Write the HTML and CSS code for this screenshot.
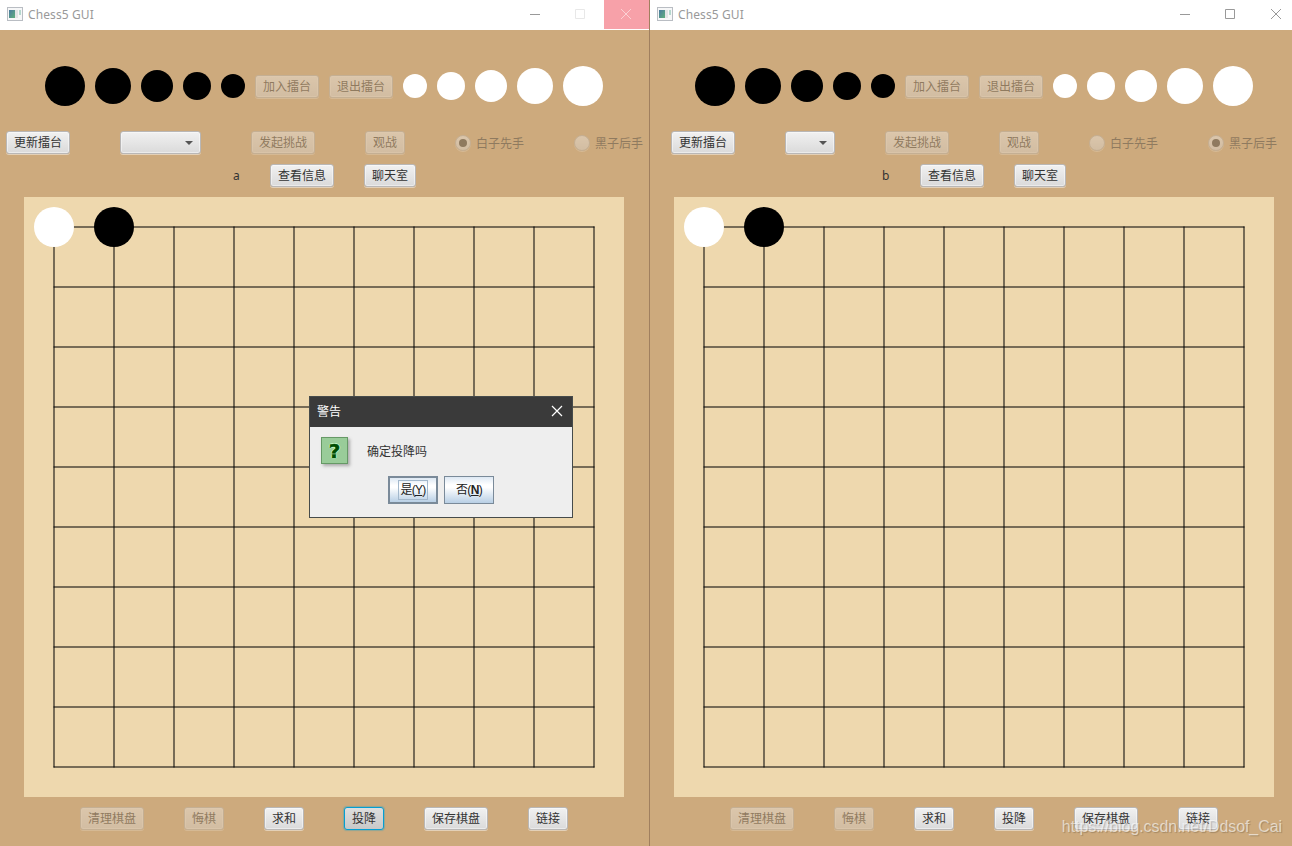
FILE: index.html
```
<!DOCTYPE html>
<html lang="zh-CN">

<head>
   <meta charset="utf-8" />
   <title>Chess5 GUI</title>
   <link rel="stylesheet" href="styles.css">
</head>

<body>
   <!-- shared shapes -->
   <svg class="defs" width="0" height="0">
      <defs>
         <linearGradient id="screen" x1="0" y1="0" x2="1" y2="1">
            <stop offset="0" stop-color="#4a7aa0" />
            <stop offset="1" stop-color="#5fb07c" />
         </linearGradient>
         <symbol id="app-icon" viewBox="0 0 16 14">
            <rect x="0.5" y="0.5" width="15" height="13" fill="#f6f7f8" stroke="#b9bdc3" />
            <rect x="2" y="3" width="6" height="8" fill="url(#screen)" />
            <rect x="8" y="3" width="3" height="8" fill="#e2e4e5" />
            <rect x="12" y="3" width="2" height="5" fill="#b5d8ce" />
         </symbol>
         <symbol id="grid" viewBox="0 0 600 600">
            <g stroke="#000" stroke-width="1" stroke-linecap="square">
               <path d="M30 30H570" /><path d="M30 90H570" /><path d="M30 150H570" /><path d="M30 210H570" /><path d="M30 270H570" />
               <path d="M30 330H570" /><path d="M30 390H570" /><path d="M30 450H570" /><path d="M30 510H570" /><path d="M30 570H570" />
               <path d="M30 30V570" /><path d="M90 30V570" /><path d="M150 30V570" /><path d="M210 30V570" /><path d="M270 30V570" />
               <path d="M330 30V570" /><path d="M390 30V570" /><path d="M450 30V570" /><path d="M510 30V570" /><path d="M570 30V570" />
            </g>
            <circle cx="30" cy="30" r="20" fill="#fff" />
            <circle cx="90" cy="30" r="20" fill="#000" />
         </symbol>
      </defs>
   </svg>

   <div class="desktop">
      <section class="window window-a">
         <header class="titlebar">
            <svg class="app-icon"><use href="#app-icon" /></svg>
            <span class="title">Chess5 GUI</span>
            <div class="controls">
               <svg class="ctl" viewBox="0 0 45 29"><path d="M16 14.5h10" /></svg>
               <svg class="ctl faded" viewBox="0 0 45 29"><path d="M16.5 9.5h9v9h-9z" /></svg>
               <svg class="ctl close hot" viewBox="0 0 45 29"><path d="M17 9l10 10M27 9l-10 10" /></svg>
            </div>
         </header>
         <div class="stones">
            <i class="stone black s40"></i><i class="stone black s36"></i><i class="stone black s32"></i><i class="stone black s28"></i><i class="stone black s24"></i>
            <button class="btn w64" disabled>加入擂台</button>
            <button class="btn w64" disabled>退出擂台</button>
            <i class="stone white s24"></i><i class="stone white s28"></i><i class="stone white s32"></i><i class="stone white s36"></i><i class="stone white s40"></i>
         </div>
         <div class="arena">
            <button class="btn w64">更新擂台</button>
            <div class="combo"></div>
            <button class="btn w64" disabled>发起挑战</button>
            <button class="btn w40" disabled>观战</button>
            <span class="radio"><i class="dot on"></i>白子先手</span>
            <span class="radio"><i class="dot"></i>黑子后手</span>
         </div>
         <div class="user">
            <span class="name">a</span>
            <button class="btn w64">查看信息</button>
            <button class="btn w52">聊天室</button>
         </div>
         <svg class="board"><use href="#grid" /></svg>
         <footer class="actions">
            <button class="btn w64" disabled>清理棋盘</button>
            <button class="btn w40" disabled>悔棋</button>
            <button class="btn w40">求和</button>
            <button class="btn w40 focused">投降</button>
            <button class="btn w64">保存棋盘</button>
            <button class="btn w40">链接</button>
         </footer>
      </section>

      <section class="window window-b">
         <header class="titlebar">
            <svg class="app-icon"><use href="#app-icon" /></svg>
            <span class="title">Chess5 GUI</span>
            <div class="controls">
               <svg class="ctl" viewBox="0 0 45 29"><path d="M16 14.5h10" /></svg>
               <svg class="ctl" viewBox="0 0 45 29"><path d="M16.5 9.5h9v9h-9z" /></svg>
               <svg class="ctl close" viewBox="0 0 45 29"><path d="M17 9l10 10M27 9l-10 10" /></svg>
            </div>
         </header>
         <div class="stones">
            <i class="stone black s40"></i><i class="stone black s36"></i><i class="stone black s32"></i><i class="stone black s28"></i><i class="stone black s24"></i>
            <button class="btn w64" disabled>加入擂台</button>
            <button class="btn w64" disabled>退出擂台</button>
            <i class="stone white s24"></i><i class="stone white s28"></i><i class="stone white s32"></i><i class="stone white s36"></i><i class="stone white s40"></i>
         </div>
         <div class="arena">
            <button class="btn w64">更新擂台</button>
            <div class="combo"></div>
            <button class="btn w64" disabled>发起挑战</button>
            <button class="btn w40" disabled>观战</button>
            <span class="radio"><i class="dot"></i>白子先手</span>
            <span class="radio"><i class="dot on"></i>黑子后手</span>
         </div>
         <div class="user">
            <span class="name">b</span>
            <button class="btn w64">查看信息</button>
            <button class="btn w52">聊天室</button>
         </div>
         <svg class="board"><use href="#grid" /></svg>
         <footer class="actions">
            <button class="btn w64" disabled>清理棋盘</button>
            <button class="btn w40" disabled>悔棋</button>
            <button class="btn w40">求和</button>
            <button class="btn w40">投降</button>
            <button class="btn w64">保存棋盘</button>
            <button class="btn w40">链接</button>
         </footer>
      </section>

      <div class="dialog">
         <div class="dialog-title">
            <span>警告</span>
            <svg class="dialog-close" viewBox="0 0 10 10"><path d="M0 0l10 10M10 0L0 10" /></svg>
         </div>
         <div class="dialog-body">
            <span class="question">?</span>
            <span>确定投降吗</span>
         </div>
         <div class="dialog-buttons">
            <button class="swing default"><span>是(<u>Y</u>)</span></button>
            <button class="swing"><span>否(<u>N</u>)</span></button>
         </div>
      </div>
      <div class="watermark">https://blog.csdn.net/Ddsof_Cai</div>
   </div>
</body>

</html>
```
FILE: styles.css
```
* {
   box-sizing: border-box
}

body {
   margin: 0;
   font: 12px/16px "Noto Sans", "Noto Sans CJK SC", sans-serif;
   color: #333;
}

.defs {
   position: absolute;
}

.desktop {
   position: relative;
   display: flex;
   width: 1292px;
   height: 846px;
   overflow: hidden;
   background: #cdaa7d;
}

.window {
   display: flex;
   flex-direction: column;
   height: 846px;
}

.window-a {
   width: 650px;
   border-right: 1px solid #a07f5f;
}

.window-b {
   width: 642px;
}

/* title bar */
.titlebar {
   display: flex;
   height: 30px;
   padding-left: 7px;
   background: #fff;
}

.app-icon {
   width: 16px;
   height: 14px;
   margin: 7px 5px 0 0;
}

.title {
   color: #999;
   line-height: 29px;
   letter-spacing: 0.1px;
}

.controls {
   display: flex;
   margin-left: auto;
}

.window-b .controls {
   margin-right: -7px;
}

.ctl {
   width: 45px;
   height: 29px;
   fill: none;
   stroke: #999;
}

.faded {
   stroke: #e8e8e8;
}

.hot {
   background: #f7a1a9;
   stroke: #fbd0d4;
}

/* toolbar rows */
.stones {
   display: flex;
   align-items: center;
   gap: 10px;
   height: 112px;
   padding-left: 45px;
}

.stone {
   border-radius: 50%;
}

.black {
   background: #000;
}

.white {
   background: #fff;
}

.s40 { width: 40px; height: 40px; }
.s36 { width: 36px; height: 36px; }
.s32 { width: 32px; height: 32px; }
.s28 { width: 28px; height: 28px; }
.s24 { width: 24px; height: 24px; }

.stones .btn {
   margin-top: 1px;
}

.btn {
   flex: none;
   height: 23px;
   padding: 1px 0 0;
   border: 1px solid #b9b7b6;
   border-radius: 3px;
   background: linear-gradient(#f1f1f1, #dadada);
   box-shadow: inset 0 0 0 1px rgba(255, 255, 255, 0.45), 0 1px 0 rgba(255, 255, 255, 0.45);
   font: inherit;
   color: #333;
   white-space: nowrap;
}

.btn:disabled {
   opacity: 0.4;
}

.focused {
   border-color: #039ed3;
   background: linear-gradient(#dedede, #c8c8c8);
   box-shadow: 0 0 1px 1px rgba(3, 158, 211, 0.3);
}

.w64 { width: 64px; }
.w52 { width: 52px; }
.w40 { width: 40px; }

.arena {
   display: flex;
   align-items: flex-start;
   gap: 50px;
   height: 33px;
   margin-top: -11px;
   padding-left: 6px;
}

.window-b .arena {
   padding-left: 21px;
}

.combo {
   display: flex;
   flex: none;
   align-items: center;
   justify-content: flex-end;
   width: 81px;
   height: 23px;
   padding-right: 7px;
   border: 1px solid #b9b7b6;
   border-radius: 3px;
   background: linear-gradient(#f1f1f1, #dadada);
   box-shadow: inset 0 0 0 1px rgba(255, 255, 255, 0.45), 0 1px 0 rgba(255, 255, 255, 0.45);
}

.window-b .combo {
   width: 50px;
}

.combo::after {
   content: "";
   border: 4px solid transparent;
   border-top-color: #555;
   border-bottom: 0;
}

.radio {
   display: flex;
   flex: none;
   align-items: center;
   gap: 5px;
   width: 69px;
   height: 26px;
   opacity: 0.4;
   white-space: nowrap;
}

.dot {
   display: flex;
   flex: none;
   align-items: center;
   justify-content: center;
   width: 16px;
   height: 16px;
   margin-top: -2px;
   border: 1px solid #b9b7b6;
   border-radius: 50%;
   background: linear-gradient(#f1f1f1, #dadada);
   box-shadow: 0 1px 0 rgba(255, 255, 255, 0.45);
}

.on::after {
   content: "";
   width: 8px;
   height: 8px;
   border-radius: 50%;
   background: #333;
}

.user {
   display: flex;
   gap: 30px;
   height: 33px;
   padding-left: 233px;
}

.window-b .user {
   padding-left: 232px;
}

.name {
   width: 7px;
   line-height: 23px;
}

.window-b .name {
   width: 8px;
}

.board {
   flex: none;
   width: 600px;
   height: 600px;
   margin-left: 24px;
   background: #eed8ae;
}

.actions {
   display: flex;
   gap: 40px;
   padding: 10px 0 0 80px;
}

/* confirm dialog */
.dialog {
   position: absolute;
   left: 309px;
   top: 396px;
   width: 264px;
   height: 122px;
   border: 1px solid #464b4b;
   background: #eee;
}

.dialog-title {
   display: flex;
   align-items: center;
   justify-content: space-between;
   height: 30px;
   padding: 0 10px 0 7px;
   background: #3a3a3a;
   color: #fff;
}

.dialog-close {
   width: 10px;
   height: 10px;
   margin-top: -2px;
   overflow: visible;
   stroke: #fff;
   stroke-width: 1.2;
}

.dialog-body {
   display: flex;
   align-items: center;
   gap: 19px;
   height: 49px;
   padding-left: 11px;
}

.question {
   width: 27px;
   height: 27px;
   margin-top: -2px;
   border: 1px solid #669966;
   background: #99cc99;
   box-shadow: 2px 2px 3px #aaa;
   color: #004d00;
   font: bold 20px/26px "DejaVu Sans", sans-serif;
   text-align: center;
   text-shadow: 1px 0 #ccffcc, -1px 0 #ccffcc, 0 1px #ccffcc, 0 -1px #ccffcc;
   -webkit-text-stroke: 0.5px #004d00;
}

.dialog-buttons {
   display: flex;
   justify-content: center;
   gap: 6px;
}

.swing {
   width: 50px;
   height: 28px;
   padding: 0;
   border: 1px solid #7a8a99;
   background: linear-gradient(#dde8f3, #fff 30%, #fff 40%, #b8cfe5);
   font: 12px/18px "Liberation Sans", "Noto Sans CJK SC", sans-serif;
   letter-spacing: -0.7px;
   color: #222;
}

.swing span {
   display: inline-block;
   padding: 0 1px;
   border: 1px solid transparent;
}

.swing u {
   font-weight: bold;
}

.default {
   border-width: 2px;
}

.default u {
   font-weight: normal;
}

.default span {
   border-color: #a3b8cc;
}

.watermark {
   position: absolute;
   right: 10px;
   bottom: 9px;
   font: 16px/20px "Liberation Sans", sans-serif;
   letter-spacing: -0.07px;
   color: rgba(255, 255, 255, 0.6);
   text-shadow: 1px 1px 1px rgba(0, 0, 0, 0.2);
}
```
